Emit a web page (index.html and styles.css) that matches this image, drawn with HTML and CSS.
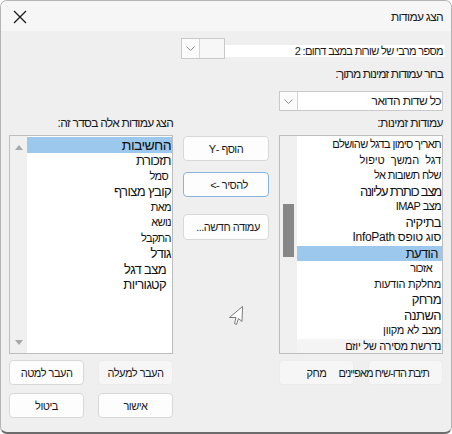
FILE: index.html
```html
<!DOCTYPE html>
<html lang="he">
<head>
<meta charset="utf-8">
<link rel="stylesheet" href="styles.css">
</head>
<body>
<div class="dialog" dir="rtl">
  <div class="titlebar">
    <span class="title">הצג עמודות</span>
    <span class="close"><svg width="14" height="14" viewBox="0 0 14 14"><path d="M1 1L13 13M13 1L1 13" stroke="#1b1b1b" stroke-width="1.3" fill="none"/></svg></span>
  </div>
  <div class="content">
    <div class="row1">
      <span class="maxlabel">מספר מרבי של שורות במצב דחום: 2</span>
      <div class="combo small">
        <span class="combo-val"></span>
        <span class="chev"><svg width="9" height="5" viewBox="0 0 9 5"><path d="M0.5 0.5L4.5 4.5L8.5 0.5" stroke="#8a8a8a" fill="none"/></svg></span>
      </div>
    </div>
    <div class="label2">בחר עמודות זמינות מתוך:</div>
    <div class="combo wide">
      <span class="combo-val">כל שדות הדואר</span>
      <span class="chev"><svg width="9" height="5" viewBox="0 0 9 5"><path d="M0.5 0.5L4.5 4.5L8.5 0.5" stroke="#8a8a8a" fill="none"/></svg></span>
    </div>
    <div class="grid">
      <div class="lbl">עמודות זמינות:</div>
      <div></div>
      <div class="lbl lbl-left">הצג עמודות אלה בסדר זה:</div>

      <div class="listbox">
        <ul class="items">
          <li class="s">תאריך סימון בדגל שהושלם</li>
          <li class="s wide">דגל המשך טיפול</li>
          <li class="s">שלח תשובות אל</li>
          <li class="m tight">מצב כותרת עליונה</li>
          <li class="s">מצב IMAP</li>
          <li class="m">בתיקיה</li>
          <li class="n loose">סוג טופס InfoPath</li>
          <li class="m sel"><span class="ind3">הודעת</span></li>
          <li class="s"><span class="ind9">אזכור</span></li>
          <li class="s loose">מחלקת הודעות</li>
          <li class="m">מרחק</li>
          <li class="m">השתנה</li>
          <li class="s loose">מצב לא מקוון</li>
          <li class="s last loose">נדרשת מסירה של יוזם</li>
        </ul>
        <div class="sbar"><div class="thumb"></div></div>
      </div>
      <div class="mid">
        <button class="btn b1">הוסף -Y</button>
        <button class="btn b2 focus">להסיר -&gt;</button>
        <button class="btn b3">עמודה חדשה...</button>
      </div>
      <div class="listbox">
        <ul class="items left">
          <li class="l sel">החשיבות</li>
          <li class="m">תזכורת</li>
          <li class="s"><span class="ind2">סמל</span></li>
          <li class="m">קובץ מצורף</li>
          <li class="s">מאת</li>
          <li class="s">נושא</li>
          <li class="s">התקבל</li>
          <li class="m">גודל</li>
          <li class="m"><span class="ind4">מצב דגל</span></li>
          <li class="m"><span class="ind4">קטגוריות</span></li>
        </ul>
        <div class="sbar arrows">
          <svg width="8" height="5" viewBox="0 0 8 5"><path d="M0 5L4 0L8 5Z" fill="#a8a8a8"/></svg>
          <svg width="8" height="5" viewBox="0 0 8 5"><path d="M0 0L4 5L8 0Z" fill="#a8a8a8"/></svg>
        </div>
      </div>

      <div class="pair">
        <button class="btn dis wrapbtn"><span class="over">תיבת הדו-שיח מאפיינים</span></button>
        <button class="btn dis">מחק</button>
      </div>
      <div class="cursorcell">
        <svg class="cursor" width="16" height="20" viewBox="0 0 16 20"><path d="M14.5 0.5L14 15.5L10.5 12.5L8.5 18.5L6.5 17.5L8 11.5L1.5 11.5Z" fill="#fff" stroke="#7a7a7a" stroke-width="1" stroke-linejoin="round"/></svg>
      </div>
      <div class="pair">
        <button class="btn dis">העבר למעלה</button>
        <button class="btn">העבר למטה</button>
      </div>

      <div></div>
      <div></div>
      <div class="pair bottom">
        <button class="btn">אישור</button>
        <button class="btn">ביטול</button>
      </div>
    </div>
  </div>
</div>
</body>
</html>
```

FILE: styles.css
```css
* { box-sizing: border-box; }
html, body { margin: 0; padding: 0; background: #ffffff; }
body {
  font-family: "Liberation Sans", "DejaVu Sans", sans-serif;
  color: #1a1a1a;
  letter-spacing: -0.6px;
}

.dialog {
  width: 452px;
  height: 434px;
  background: #efefef;
  border: 1px solid #b4b4b4;
  border-bottom: 2px solid #6c6c6c;
  border-radius: 7px;
  overflow: hidden;
  position: relative;
}

.titlebar {
  height: 30px;
  background: #f6f6f6;
  display: flex;
  align-items: center;
  justify-content: space-between;
  padding: 0 8px 0 12px;
}
.title { font-size: 12px; line-height: 14px; margin-top: 2px; letter-spacing: -0.7px; }
.close { display: flex; width: 14px; height: 14px; margin-top: 2px; }

.content { padding: 7px 8px 0 8px; }

.row1 { display: flex; align-items: flex-end; height: 21px; }
.maxlabel {
  background: #ffffff;
  font-size: 11px;
  line-height: 12px;
  height: 12px;
  width: 220px;
  margin-bottom: 2px;
  margin-right: -2px;
  padding-right: 2px;
  white-space: nowrap;
  letter-spacing: -0.65px;
}
.combo {
  display: flex;
  border: 1px solid #c9c9c9;
  background: #ffffff;
}
.combo.small { width: 44px; height: 21px; background: #f4f4f4; }
.combo.small .combo-val { flex: 1; background: #f7f7f7; }
.combo.wide { width: 164px; height: 20px; margin-top: 10px; }
.combo-val { flex: 1; font-size: 12px; line-height: 18px; padding-right: 1px; white-space: nowrap; }
.chev {
  width: 18px;
  border-right: 1px solid #d4d4d4;
  display: flex;
  align-items: center;
  justify-content: center;
  background: #fbfbfb;
}

.label2 { font-size: 12px; line-height: 14px; margin-top: 8px; height: 14px; letter-spacing: -0.9px; }

.grid {
  display: grid;
  grid-template-columns: 164px 86px 164px;
  grid-template-rows: 24px 219px 25px 25px;
  column-gap: 10px;
  padding-left: 1px;
}
.lbl { font-size: 12px; line-height: 14px; align-self: center; white-space: nowrap; }
.lbl-left { letter-spacing: -0.75px; }

.listbox {
  display: flex;
  border: 1px solid #bdbdbd;
  background: #ffffff;
  height: 219px;
}
.items {
  list-style: none;
  margin: 0;
  padding: 1px 0 0 0;
  flex: 1;
  overflow: hidden;
}
.items li {
  height: 15.5px;
  line-height: 15.5px;
  padding-right: 1px;
  white-space: nowrap;
  color: #111;
}
.items li.s { font-size: 11px; }
.items li.n { font-size: 12px; }
.items li.m { font-size: 13px; }
.items li.l { font-size: 14px; height: 16px; line-height: 16px; }
.items li.sel { background: #9cc8ee; }
.items li.last { background: #f4f4f4; }
.items li.wide { letter-spacing: 0; word-spacing: 3px; }
.items li.tight { font-size: 13px; letter-spacing: -1.2px; }
.items li.loose { letter-spacing: -0.3px; }
.ind2 { padding-right: 3px; }
.ind3 { padding-right: 3px; }
.ind4 { padding-right: 5px; }
.ind9 { padding-right: 9px; }

.sbar {
  width: 17px;
  background: #f0f0f0;
  position: relative;
  display: flex;
  flex-direction: column;
}
.thumb {
  position: absolute;
  top: 68px;
  left: 3px;
  width: 11px;
  height: 53px;
  background: #878787;
}
.sbar.arrows {
  align-items: center;
  justify-content: space-between;
  padding: 9px 0 8px 0;
}

.mid { display: flex; flex-direction: column; }
.btn {
  font-family: inherit;
  font-size: 11px;
  letter-spacing: -0.5px;
  color: #1a1a1a;
  background: #fdfdfd;
  border: 1px solid #d8d8d8;
  border-radius: 4px;
  width: 75px;
  height: 25px;
  padding: 0;
  white-space: nowrap;
  display: flex;
  align-items: center;
  justify-content: center;
}
.mid .btn { width: 86px; }
.b1 { margin-top: 1px; }
.b2 { margin-top: 11px; padding-left: 6px; }
.b3 { margin-top: 17px; height: 26px; padding-left: 4px; }
.btn.focus { border-color: #86b4df; }
.btn.dis { background: #f6f6f6; border-color: #ececec; }
.wrapbtn {
  justify-content: flex-start;
  overflow: visible;
  padding-right: 13px;
  position: relative;
  z-index: 1;
}
.over { white-space: nowrap; letter-spacing: -0.9px; }

.pair { display: flex; justify-content: space-between; margin-top: 6px; }
.pair.bottom { margin-top: 14px; }

.cursorcell { position: relative; }
.cursor { position: absolute; top: -48px; left: 45px; }
```
